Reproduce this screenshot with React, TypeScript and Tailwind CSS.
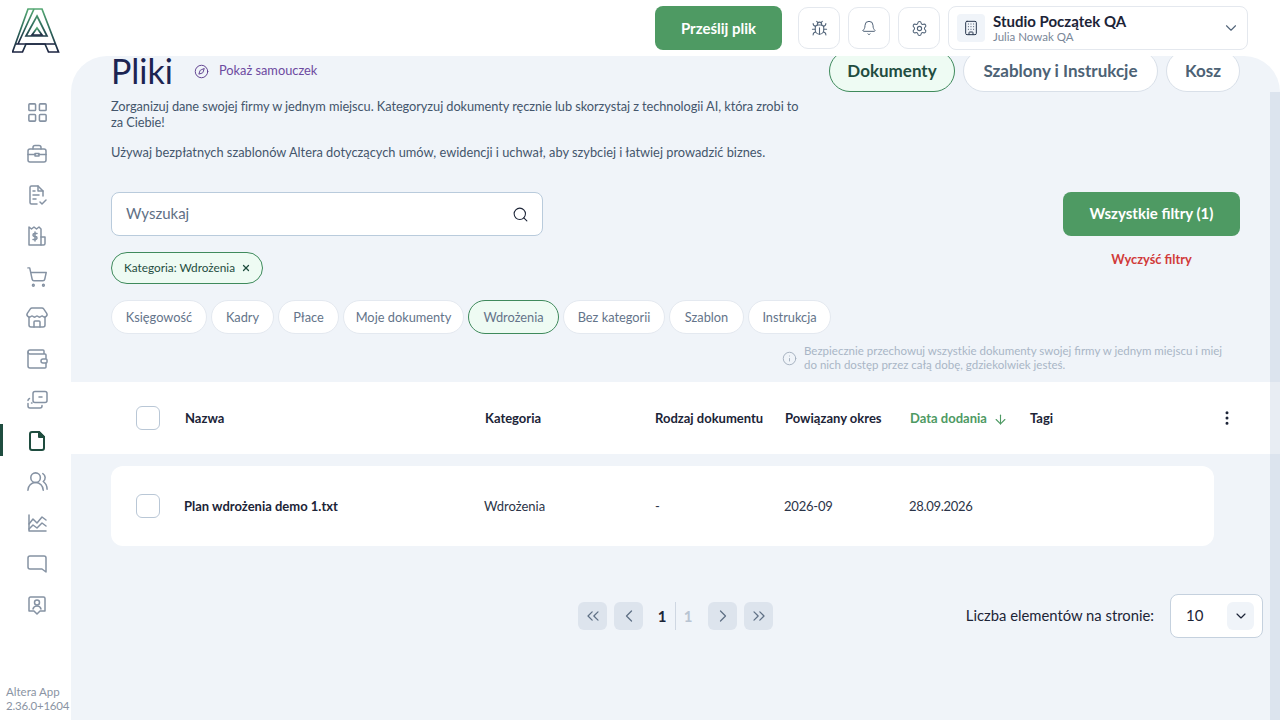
import {
  ArrowDown,
  Bell,
  Bug,
  Building,
  ChevronDown,
  ChevronLeft,
  ChevronRight,
  ChevronsLeft,
  ChevronsRight,
  Compass,
  EllipsisVertical,
  Info,
  LayoutGrid,
  Search,
  Settings,
  ShoppingCart,
  Store,
  UsersRound,
  Wallet,
  X,
} from "lucide-react";
import type { ReactNode } from "react";

const Svg = ({ children }: { children: ReactNode }) => (
  <svg width="24" height="24" viewBox="0 0 24 24" fill="none" stroke="currentColor" strokeWidth="1.5" strokeLinecap="round" strokeLinejoin="round">
    {children}
  </svg>
);

const Logo = () => (
  <svg width="48" height="46" viewBox="0 0 48 46" fill="none" strokeWidth="1.7" strokeLinejoin="miter">
    <defs>
      <linearGradient id="logoGrad" x1="0" y1="0" x2="0" y2="1">
        <stop offset="0" stopColor="#55a873" />
        <stop offset="0.5" stopColor="#2f6a5c" />
        <stop offset="1" stopColor="#1b2340" />
      </linearGradient>
    </defs>
    <g stroke="url(#logoGrad)">
      <path d="M16 1H30L46.500 44H36.500L33 36H14L10.500 44H0.500Z" />
      <path d="M22 1L6 36M4 36H43M25 8L35 28H14Z" />
      <path d="M25 20L30 27H20Z" />
    </g>
  </svg>
);

const navIcons: ReactNode[] = [
  <LayoutGrid size={23} strokeWidth={1.6} />,
  <Svg>
    <rect x="3" y="7" width="18" height="13" rx="2" />
    <path d="M8 7V5.500a2 2 0 0 1 2-2h4a2 2 0 0 1 2 2V7M3 12.500h7M14 12.500h7" />
    <rect x="10" y="11.500" width="4" height="2.500" />
  </Svg>,
  <Svg>
    <path d="M12 21H6.500A1.500 1.500 0 0 1 5 19.500v-15A1.500 1.500 0 0 1 6.500 3H13l5 5v5" />
    <path d="M13 3v5h5M8 8h2M8 12h6M8 16h3M15 19l2 2 4-4" />
  </Svg>,
  <Svg>
    <path d="M4 21V3l2.500 2L9 3l2.500 2L14 3l2 2v16Z" />
    <path d="M16 13h4v6.500a1.500 1.500 0 0 1-1.500 1.500H16" />
    <path d="M12 9.500H9.500a1.250 1.250 0 0 0 0 3h1a1.250 1.250 0 0 1 0 3H8M10 8v9" />
  </Svg>,
  <ShoppingCart size={22} strokeWidth={1.6} />,
  <Store size={24} strokeWidth={1.5} />,
  <Wallet size={24} strokeWidth={1.5} />,
  <Svg>
    <rect x="8" y="3.500" width="14" height="11" rx="2" />
    <path d="M14 9h3M3 12.500c0-1 .5-1.500 1.500-2M3 15.500V18a2 2 0 0 0 2 2h10a2 2 0 0 0 2-2v-.5M6.500 15h.5" />
  </Svg>,
  <svg width="24" height="24" viewBox="0 0 24 24" fill="none" stroke="#1f4d3f" strokeWidth="2" strokeLinejoin="round">
    <path d="M14 3H7a2 2 0 0 0-2 2v14a2 2 0 0 0 2 2h10a2 2 0 0 0 2-2V8Z" />
    <path d="M14 3v5h5Z" fill="#1f4d3f" />
  </svg>,
  <UsersRound size={23} strokeWidth={1.6} />,
  <Svg>
    <path d="M4 4v16h17" />
    <path d="M4 13l4-5 4 4 5-6 4 3M4 18l4-4 4 3 5-5 4 3" />
  </Svg>,
  <Svg>
    <path d="M5 4h14a2 2 0 0 1 2 2v14l-4-3H5a2 2 0 0 1-2-2V6a2 2 0 0 1 2-2Z" />
  </Svg>,
  <Svg>
    <path d="M5.500 4h13A1.500 1.500 0 0 1 20 5.500V18h-5l-3 3-3-3H4V5.500A1.500 1.500 0 0 1 5.500 4Z" />
    <circle cx="12" cy="9.500" r="2.500" />
    <path d="M8 16c.5-2 2-3 4-3s3.500 1 4 3" />
  </Svg>,
];

const filterChips = [
  { label: "Księgowość", width: "w-[96px]" },
  { label: "Kadry", width: "w-[63px]" },
  { label: "Płace", width: "w-[61px]" },
  { label: "Moje dokumenty", width: "w-[121px]" },
  { label: "Wdrożenia", width: "w-[91px]", active: true },
  { label: "Bez kategorii", width: "w-[102px]" },
  { label: "Szablon", width: "w-[75px]" },
  { label: "Instrukcja", width: "w-[83px]" },
];

const Sidebar = () => (
  <aside className="flex w-[71px] shrink-0 flex-col bg-white">
    <div className="mt-2 pl-3">
      <Logo />
    </div>
    <nav className="mt-[38px] flex flex-col">
      {navIcons.map((icon, i) => (
        <div key={i} className="relative flex h-[41px] items-center justify-center pl-[3px] text-[#8592a3]">
          {i === 8 && <div className="absolute left-0 top-[4px] h-[32px] w-[3px] bg-[#1f4d3f]" />}
          {icon}
        </div>
      ))}
    </nav>
    <div className="mt-auto mb-[7px] whitespace-nowrap pl-[6px] text-[11.500px] leading-[14px] text-[#8a94a3]">
      <div>Altera App</div>
      <div className="tracking-[-0.2px]">2.36.0+1604</div>
    </div>
  </aside>
);

const TopBar = () => (
  <header className="flex h-14 shrink-0 items-center justify-end gap-2 pr-8">
    <button className="mr-2 h-11 w-[127px] rounded-lg bg-[#4e9a63] text-[15px] font-bold text-white">Prześlij plik</button>
    {[Bug, Bell, Settings].map((Icon, i) => (
      <div key={i} className="flex h-[42px] w-[42px] items-center justify-center rounded-[10px] border border-[#e4e8ee] text-[#53657a]">
        <Icon size={i === 1 ? 16 : 17} strokeWidth={1.5} />
      </div>
    ))}
    <div className="flex h-11 w-[300px] items-center rounded-lg border border-[#e4e8ee] pl-2 pr-[7px]">
      <div className="flex h-7 w-7 items-center justify-center rounded bg-[#f0f4f9] text-[#2b3950]">
        <Building size={16} strokeWidth={1.5} />
      </div>
      <div className="ml-2 flex flex-col pb-px">
        <span className="text-[15px] font-bold leading-[18px] text-[#1c2437]">Studio Początek QA</span>
        <span className="text-[11.500px] leading-[14px] text-[#7a8798]">Julia Nowak QA</span>
      </div>
      <ChevronDown size={18} strokeWidth={1.5} className="ml-auto text-[#53657a]" />
    </div>
  </header>
);

const FilesHeader = () => (
  <div className="px-10">
    <div className="flex items-start justify-between">
      <div className="flex h-[30px] items-center">
        <h1 className="text-[34px] font-normal leading-[28px] text-[#1c2452]">Pliki</h1>
        <Compass size={15} strokeWidth={1.5} className="ml-[21px] text-[#5b3b8c]" />
        <span className="ml-[10px] text-[12.800px] text-[#6d4aa0]">Pokaż samouczek</span>
      </div>
      {/* tabs are scrolled partly under the top bar */}
      <div className="flex h-9 items-end gap-2 overflow-hidden text-[17px] font-bold">
        <div className="flex h-[42px] w-[126px] shrink-0 items-center justify-center rounded-full border border-[#3f8a5c] bg-[#eefbf3] text-[#1f4d3f]">Dokumenty</div>
        <div className="flex h-[42px] w-[195px] shrink-0 items-center justify-center rounded-full border border-[#d9e0e9] bg-white text-[#4d6275]">Szablony i Instrukcje</div>
        <div className="flex h-[42px] w-[74px] shrink-0 items-center justify-center rounded-full border border-[#d9e0e9] bg-white text-[#4d6275]">Kosz</div>
      </div>
    </div>
    <div className="mt-[7px] w-[700px] text-[12.800px] leading-[15.500px] text-[#44566c]">
      <p className="tracking-[-0.07px]">
        Zorganizuj dane swojej firmy w jednym miejscu. Kategoryzuj dokumenty ręcznie lub skorzystaj z technologii AI, która zrobi to za Ciebie!
      </p>
      <p className="mt-[14.500px]">Używaj bezpłatnych szablonów Altera dotyczących umów, ewidencji i uchwał, aby szybciej i łatwiej prowadzić biznes.</p>
    </div>
  </div>
);

const Filters = () => (
  <div className="px-10">
    <div className="mt-8 flex justify-between">
      <div className="flex h-11 w-[432px] items-center justify-between rounded-lg border border-[#b9cbdc] bg-white pl-[14px] pr-[13px]">
        <span className="pb-[2px] text-[15px] text-[#5f7085]">Wyszukaj</span>
        <Search size={17} strokeWidth={1.5} className="text-[#1c2437]" />
      </div>
      <button className="h-11 w-[177px] rounded-lg bg-[#4e9a63] pb-[2px] text-[15px] font-bold text-white">Wszystkie filtry (1)</button>
    </div>
    <div className="mt-4 flex items-start justify-between">
      <div className="flex h-8 w-[152px] items-center justify-between rounded-full border border-[#3f8a5c] bg-[#eefbf3] pl-3 pr-[11px] text-[11.800px] text-[#1f4d3f]">
        <span>Kategoria: Wdrożenia</span>
        <X size={10} strokeWidth={3} />
      </div>
      <span className="-mt-px w-[177px] text-center text-[12.800px] font-bold leading-[16px] text-[#d13a3a]">Wyczyść filtry</span>
    </div>
    <div className="mt-4 flex gap-1">
      {filterChips.map((chip) => (
        <div
          key={chip.label}
          className={`flex h-[34px] items-center justify-center rounded-full border pt-[2px] text-[12.800px] text-[#64748a] ${chip.width} ${
            chip.active ? "border-[#3f8a5c] bg-[#eefbf3]" : "border-[#e4e9f0] bg-white"
          }`}
        >
          {chip.label}
        </div>
      ))}
    </div>
    <div className="ml-[671px] mt-[10px] flex items-center text-[11.500px] leading-[14px] text-[#a9b6c6]">
      <Info size={15} strokeWidth={1.5} className="mr-[7px] shrink-0 text-[#a3afbe]" />
      <p className="w-[430px]">
        Bezpiecznie przechowuj wszystkie dokumenty swojej firmy w jednym miejscu i miej do nich dostęp przez całą dobę, gdziekolwiek jesteś.
      </p>
    </div>
  </div>
);

const Checkbox = () => <div className="h-6 w-6 shrink-0 rounded-md border border-[#b9c7d6] bg-white" />;

const FilesTable = () => (
  <>
    <div className="mt-[10px] flex h-[72px] items-center bg-white pl-[65px] pr-[44px] text-[13px] font-bold text-[#1c2437]">
      <Checkbox />
      <span className="ml-[25px] w-[300px] pt-[2px]">Nazwa</span>
      <span className="w-[170px] pt-[2px]">Kategoria</span>
      <span className="w-[130px] whitespace-nowrap pt-[2px]">Rodzaj dokumentu</span>
      <span className="w-[125px] whitespace-nowrap pt-[2px]">Powiązany okres</span>
      <span className="flex w-[120px] items-center gap-[6px] pt-[2px] text-[#4e9a63]">
        Data dodania <ArrowDown size={15} strokeWidth={1.75} />
      </span>
      <span className="pt-[2px]">Tagi</span>
      <EllipsisVertical size={18} strokeWidth={2} className="ml-auto" />
    </div>
    <div className="ml-10 mt-3 flex h-20 w-[1103px] items-center rounded-xl bg-white pl-[25px] text-[13px] text-[#2b3448]">
      <Checkbox />
      <span className="ml-6 w-[300px] pt-[2px] font-bold text-[#1c2437]">Plan wdrożenia demo 1.txt</span>
      <span className="w-[171px] pt-[2px]">Wdrożenia</span>
      <span className="w-[129px] pt-[2px]">-</span>
      <span className="w-[125px] pt-[2px] tracking-[-0.2px]">2026-09</span>
      <span className="pt-[2px] tracking-[-0.3px]">28.09.2026</span>
    </div>
  </>
);

const PageBtn = ({ children }: { children: ReactNode }) => (
  <div className="flex h-7 w-[29px] items-center justify-center rounded-md bg-[#dde4ed] text-[#5f7085]">{children}</div>
);

const Pagination = () => (
  <div className="mt-12 flex h-11 items-center pl-[507px] pr-[17px]">
    <div className="flex items-center">
      <PageBtn>
        <ChevronsLeft size={20} strokeWidth={1.5} />
      </PageBtn>
      <div className="ml-[7px]">
        <PageBtn>
          <ChevronLeft size={20} strokeWidth={1.5} />
        </PageBtn>
      </div>
      <span className="ml-[14px] w-[10px] text-center text-[15px] font-bold text-[#1c2437]">1</span>
      <div className="ml-2 h-7 w-px bg-[#cfd7e2]" />
      <span className="ml-[7px] w-[10px] text-center text-[15px] font-bold text-[#b9c4d2]">1</span>
      <div className="ml-[15px]">
        <PageBtn>
          <ChevronRight size={20} strokeWidth={1.5} />
        </PageBtn>
      </div>
      <div className="ml-[7px]">
        <PageBtn>
          <ChevronsRight size={20} strokeWidth={1.5} />
        </PageBtn>
      </div>
    </div>
    <span className="ml-auto pb-[2px] text-[14.800px] text-[#1c2437]">Liczba elementów na stronie:</span>
    <div className="ml-4 flex h-11 w-[93px] items-center justify-between rounded-lg border border-[#c5d1de] bg-white pl-[15px] pr-2 text-[15px] text-[#1c2437]">
      <span className="pb-[2px]">10</span>
      <div className="flex h-7 w-[27px] items-center justify-center rounded-md bg-[#f0f4f9]">
        <ChevronDown size={16} strokeWidth={1.75} />
      </div>
    </div>
  </div>
);

export default function App() {
  return (
    <div className="flex h-[720px] w-[1280px] overflow-hidden bg-white font-['Lato','Liberation_Sans',sans-serif]">
      <Sidebar />
      <div className="flex min-w-0 flex-1 flex-col">
        <TopBar />
        <main className="relative flex-1 rounded-t-[36px] bg-[#f0f4f9]">
          <FilesHeader />
          <Filters />
          <FilesTable />
          <Pagination />
          <div className="absolute bottom-0 right-0 top-9 w-[10px] bg-[#8aa3c4]/20" />
        </main>
      </div>
    </div>
  );
}
